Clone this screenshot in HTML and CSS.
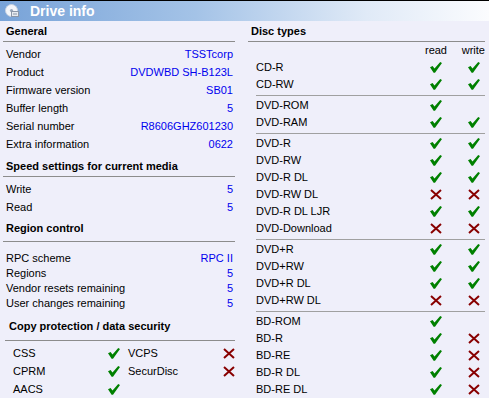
FILE: index.html
```
<!DOCTYPE html>
<html>
<head>
<meta charset="utf-8">
<title>Drive info</title>
<link rel="stylesheet" href="styles.css">
</head>
<body>
<div class="titlebar">
	<svg class="titlebar-icon" width="14" height="14" viewBox="0 0 14 14">
		<circle cx="6.5" cy="6.5" r="6" fill="#f4f6fa" stroke="#c8d2e0"/>
		<circle cx="6.5" cy="6.5" r="1.6" fill="#9aa8bc"/>
		<rect x="6.5" y="7.5" width="7" height="5" fill="#e6eaf0" stroke="#8a96a8"/>
		<line x1="8" y1="10" x2="12" y2="10" stroke="#8a96a8"/>
	</svg>
	<span>Drive info</span>
</div>

<div class="panes">
	<div class="pane pane-left">
		<section class="group">
			<h2 class="group-title">General</h2>
			<div class="props">
				<div class="prop"><span>Vendor</span><span class="val">TSSTcorp</span></div>
				<div class="prop"><span>Product</span><span class="val">DVDWBD SH-B123L</span></div>
				<div class="prop"><span>Firmware version</span><span class="val">SB01</span></div>
				<div class="prop"><span>Buffer length</span><span class="val">5</span></div>
				<div class="prop"><span>Serial number</span><span class="val">R8606GHZ601230</span></div>
				<div class="prop"><span>Extra information</span><span class="val">0622</span></div>
			</div>
		</section>

		<section class="group group-speed">
			<h2 class="group-title">Speed settings for current media</h2>
			<div class="props">
				<div class="prop"><span>Write</span><span class="val">5</span></div>
				<div class="prop"><span>Read</span><span class="val">5</span></div>
			</div>
		</section>

		<section class="group group-region">
			<h2 class="group-title">Region control</h2>
			<div class="props">
				<div class="prop"><span>RPC scheme</span><span class="val">RPC II</span></div>
				<div class="prop"><span>Regions</span><span class="val">5</span></div>
				<div class="prop"><span>Vendor resets remaining</span><span class="val">5</span></div>
				<div class="prop"><span>User changes remaining</span><span class="val">5</span></div>
			</div>
		</section>

		<section class="group group-copy">
			<h2 class="group-title">Copy protection / data security</h2>
			<div class="copy">
				<span>CSS</span><i class="ok"></i>
				<span>VCPS</span><i class="no"></i>
				<span>CPRM</span><i class="ok"></i>
				<span>SecurDisc</span><i class="no"></i>
				<span>AACS</span><i class="ok"></i>
			</div>
		</section>
	</div>

	<div class="pane pane-right">
		<section class="group">
			<h2 class="group-title">Disc types</h2>
			<div class="discs">
				<div class="disc disc-head"><span></span><span>read</span><span>write</span></div>

				<div class="disc"><span>CD-R</span><i class="ok"></i><i class="ok"></i></div>
				<div class="disc"><span>CD-RW</span><i class="ok"></i><i class="ok"></i></div>
				<hr class="sep">
				<div class="disc"><span>DVD-ROM</span><i class="ok"></i><i></i></div>
				<div class="disc"><span>DVD-RAM</span><i class="ok"></i><i class="ok"></i></div>
				<hr class="sep">
				<div class="disc"><span>DVD-R</span><i class="ok"></i><i class="ok"></i></div>
				<div class="disc"><span>DVD-RW</span><i class="ok"></i><i class="ok"></i></div>
				<div class="disc"><span>DVD-R DL</span><i class="ok"></i><i class="ok"></i></div>
				<div class="disc"><span>DVD-RW DL</span><i class="no"></i><i class="no"></i></div>
				<div class="disc"><span>DVD-R DL LJR</span><i class="ok"></i><i class="ok"></i></div>
				<div class="disc"><span>DVD-Download</span><i class="no"></i><i class="no"></i></div>
				<hr class="sep">
				<div class="disc"><span>DVD+R</span><i class="ok"></i><i class="ok"></i></div>
				<div class="disc"><span>DVD+RW</span><i class="ok"></i><i class="ok"></i></div>
				<div class="disc"><span>DVD+R DL</span><i class="ok"></i><i class="ok"></i></div>
				<div class="disc"><span>DVD+RW DL</span><i class="no"></i><i class="no"></i></div>
				<hr class="sep">
				<div class="disc"><span>BD-ROM</span><i class="ok"></i><i></i></div>
				<div class="disc"><span>BD-R</span><i class="ok"></i><i class="no"></i></div>
				<div class="disc"><span>BD-RE</span><i class="ok"></i><i class="no"></i></div>
				<div class="disc"><span>BD-R DL</span><i class="ok"></i><i class="no"></i></div>
				<div class="disc"><span>BD-RE DL</span><i class="ok"></i><i class="no"></i></div>
			</div>
		</section>
	</div>
</div>
</body>
</html>
```

FILE: styles.css
```
*{ margin:0; padding:0; box-sizing:border-box;}
html, body{ height:100%;}
body{ background:#efeffa; color:#000; font:11px/18px "Liberation Sans",Arial,sans-serif; overflow:hidden;}

/* title bar */
.titlebar{ height:21px; border-top:1px solid #000; background:linear-gradient(to right,#78a3d8 0%,#a4c3e7 40%,#e0eaf7 75%,#fbfcfe 100%); display:flex; align-items:center; padding-left:5px; color:#fff; font:bold 14px/20px "Liberation Sans",Arial,sans-serif;}
.titlebar-icon{ margin-right:11px; flex:none;}

.panes{ display:flex; gap:13px; padding:0 4px 0 3px;}
.pane-left{ width:232px; flex:none;}
.pane-right{ flex:1;}

/* groups */
.group{ margin-top:3px;}
.group-title{ font:bold 11px/14px "Liberation Sans",Arial,sans-serif; padding:0 0 3px 3px; border-bottom:1px solid #8c8c8c;}
.props{ padding-top:3px;}
.prop{ display:flex; justify-content:space-between; padding:0 2px 0 3px; height:18px;}
.val{ color:#0000ee;}

.group-speed{ margin-top:6px;}
.group-region{ margin-top:5px;}
.group-region .group-title{ padding-bottom:6px;}
.group-region .props{ padding-top:9px;}
.group-region .prop{ height:15px; line-height:15px;}
.group-copy{ margin:8px 0 0 2px;}
.group-copy .group-title{ padding:0 0 7px 4px;}

.copy{ display:grid; grid-template-columns:95px 20px 1fr 12px; grid-auto-rows:18px; padding:3px 0 0 8px; align-items:center;}

/* disc types */
.disc{ display:grid; grid-template-columns:1fr 38px 38px; height:17px; line-height:17px; align-items:center; padding-left:8px;}
.disc > i{ justify-self:end; margin-right:5px;}
.disc-head span{ text-align:right;}
.sep{ border:0; border-top:1px solid #a0a0a0; margin:2px 0 1px 8px;}

/* status icons */
i{ display:block; width:12px; height:11px;}
i.ok{ background:url("data:image/svg+xml;utf8,<svg xmlns='http://www.w3.org/2000/svg' width='12' height='11' viewBox='0 0 12 11'><polygon points='0,5.2 2.6,3.9 4.5,6.6 10.2,0 12,1.1 5,10.8 3.6,10.8' fill='%23008000'/></svg>") no-repeat;}
i.no{ background:url("data:image/svg+xml;utf8,<svg xmlns='http://www.w3.org/2000/svg' width='12' height='11' viewBox='0 0 12 11'><path d='M1 1 L11 10 M11 1 L1 10' stroke='%23880000' stroke-width='2'/></svg>") no-repeat;}
```
